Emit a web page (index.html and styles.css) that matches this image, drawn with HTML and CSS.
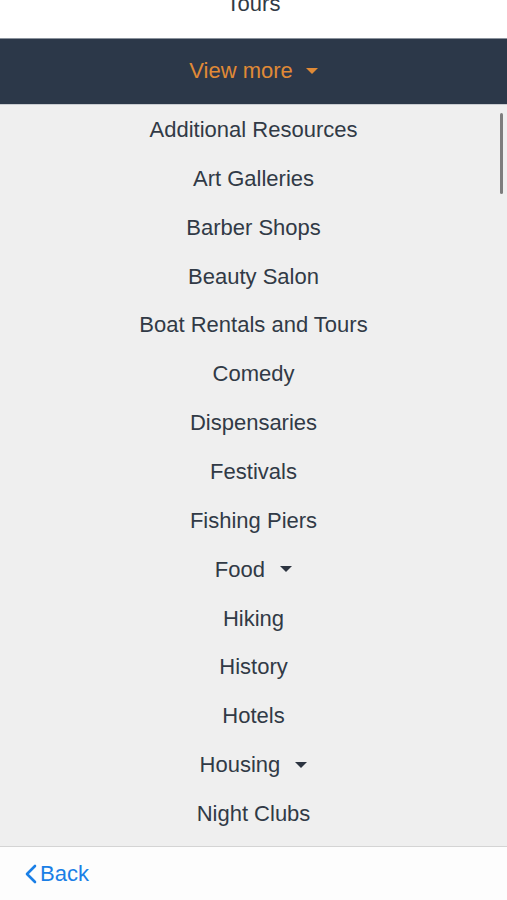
FILE: index.html
```html
<!DOCTYPE html>
<html lang="en">
<head>
    <meta charset="UTF-8">
    <meta name="viewport" content="width=device-width, initial-scale=1.0">
    <title>Categories</title>
    <link rel="stylesheet" href="styles.css">
</head>
<body>
    <div class="top">
        <p class="cut">Tours</p>
    </div>

    <div class="view-more">
        <span>View more</span>
        <span class="caret orange"></span>
    </div>

    <div class="list">
        <ul>
            <li>Additional Resources</li>
            <li>Art Galleries</li>
            <li>Barber Shops</li>
            <li>Beauty Salon</li>
            <li>Boat Rentals and Tours</li>
            <li>Comedy</li>
            <li>Dispensaries</li>
            <li>Festivals</li>
            <li>Fishing Piers</li>
            <li>Food <span class="caret dark"></span></li>
            <li>Hiking</li>
            <li>History</li>
            <li>Hotels</li>
            <li>Housing <span class="caret dark"></span></li>
            <li>Night Clubs</li>
        </ul>
        <div class="scrollbar"></div>
    </div>

    <footer>
        <a href="#" class="back">
            <svg width="12" height="20" viewBox="0 0 12 20"><path d="M10 2 L2 10 L10 18" fill="none" stroke="#1a7fe6" stroke-width="2.6" stroke-linecap="round" stroke-linejoin="round"/></svg>
            Back
        </a>
    </footer>
</body>
</html>
```

FILE: styles.css
```css
body {
    font-family: "Liberation Sans", Arial, sans-serif;
    margin: 0;
    padding: 0;
    background: #fff;
    color: #313a46;
    height: 900px;
    overflow: hidden;
}
.top {
    height: 38px;
    background: #fff;
    overflow: hidden;
}
.cut {
    margin: 0;
    text-align: center;
    font-size: 22px;
    line-height: 22px;
    margin-top: -7px;
}
.view-more {
    height: 66px;
    background: #2c3849;
    color: #e08a36;
    font-size: 22px;
    display: flex;
    align-items: center;
    justify-content: center;
    gap: 13px;
    border-top: 1px solid #8a929c;
    box-sizing: border-box;
    padding-bottom: 2px;
}
.caret {
    display: inline-block;
    width: 0;
    height: 0;
    border-left: 6px solid transparent;
    border-right: 6px solid transparent;
    border-top: 6px solid;
    vertical-align: middle;
    margin-left: 9px;
    margin-bottom: 3px;
}
.caret.orange {
    color: #e08a36;
    margin-left: 0;
    margin-bottom: 0;
}
.caret.dark {
    color: #2c3440;
}
.list {
    position: relative;
    height: 742px;
    background: #efefef;
    overflow: hidden;
    border-top: 1px solid #c9ccd0;
    box-sizing: border-box;
}
.list ul {
    list-style: none;
    margin: 0;
    padding: 0;
    margin-top: 1px;
}
.list li {
    height: 48.86px;
    line-height: 48.86px;
    text-align: center;
    font-size: 22px;
}
.scrollbar {
    position: absolute;
    right: 4px;
    top: 8px;
    width: 3px;
    height: 81px;
    border-radius: 2px;
    background: #7d7d7d;
}
footer {
    height: 54px;
    border-top: 1px solid #d4d4d4;
    background: #fdfdfd;
    display: flex;
    align-items: center;
    padding-left: 25px;
}
.back {
    color: #1a7fe6;
    text-decoration: none;
    font-size: 22px;
    display: flex;
    align-items: center;
    gap: 3px;
}
```
